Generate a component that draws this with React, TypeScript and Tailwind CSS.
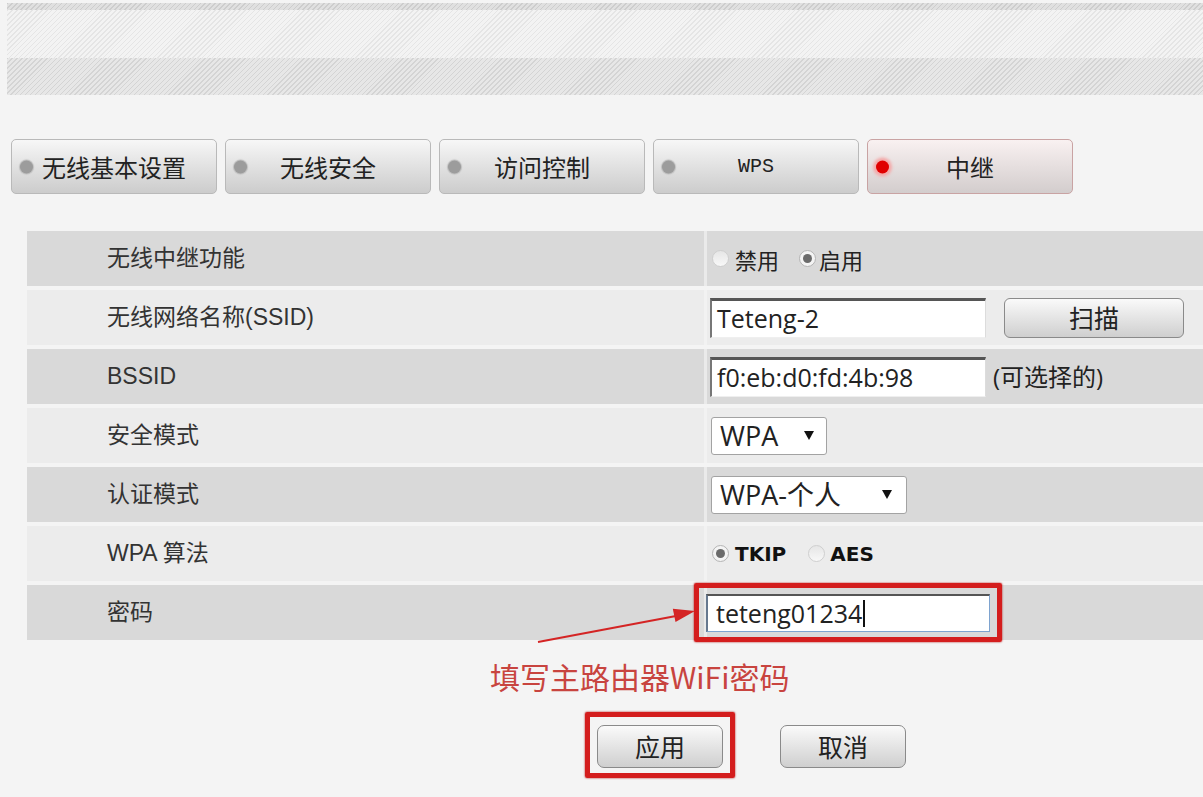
import React from "react";

const LABEL_FONT = "font-['Liberation_Sans','Noto_Sans_CJK_SC',sans-serif]";
const WIDGET_FONT = "font-['Open_Sans','Noto_Sans_CJK_SC',sans-serif]";
const CJK_FONT = "font-['Noto_Sans_CJK_SC',sans-serif]";

function Tab({ label, active, mono }: { label: string; active?: boolean; mono?: boolean }) {
  return (
    <div
      className={`relative w-[206px] h-[55px] shrink-0 rounded-[5px] border flex items-center justify-center text-[#222] ${
        active
          ? "border-[#c9a3a3] bg-linear-to-b from-[#f9f1f1] to-[#d3cdcd]"
          : "border-[#b9b9b9] bg-linear-to-b from-[#f7f7f7] to-[#cccccc]"
      }`}
    >
      <span
        className={`absolute left-[8px] top-1/2 -translate-y-1/2 rounded-full ${
          active
            ? "w-[13px] h-[13px] bg-[#e00000] shadow-[0_0_3px_3px_#f4a9a9]"
            : "w-[13px] h-[13px] bg-[#9c9c9c] shadow-[0_0_1px_1px_#bdbdbd]"
        }`}
      />
      <span
        className={
          mono
            ? "font-['Liberation_Mono',monospace] text-[20px] leading-none"
            : `${CJK_FONT} text-[24px] leading-none`
        }
      >
        {label}
      </span>
    </div>
  );
}

function Row({ dark, label, children }: { dark?: boolean; label: string; children?: React.ReactNode }) {
  return (
    <div className={`flex h-[55px] ${dark ? "bg-[#d9d9d9]" : "bg-[#ececec]"}`}>
      <div className={`w-[677px] shrink-0 pl-[80px] flex items-center text-[23px] text-[#333] leading-none ${LABEL_FONT}`}>
        {label}
      </div>
      <div className={`w-[3px] shrink-0 ${dark ? "bg-[#eaeaea]" : "bg-[#f2f2f2]"}`} />
      <div className="flex-1 flex items-center pl-[3px]">{children}</div>
    </div>
  );
}

function Radio({ checked }: { checked?: boolean }) {
  return (
    <span
      className={`w-[17px] h-[17px] rounded-full border flex items-center justify-center shrink-0 ${
        checked ? "border-[#b4b4b4] bg-[#f4f4f4]" : "border-[#cfcfcf] bg-linear-to-b from-[#e6e6e6] to-[#f8f8f8]"
      }`}
    >
      {checked && <span className="w-[9px] h-[9px] rounded-full bg-[#6b6b6b]" />}
    </span>
  );
}

function TextBox({ value, width = 276 }: { value: string; width?: number }) {
  return (
    <div
      className={`h-[40px] bg-white border-t-[3px] border-l-2 border-r border-b border-t-[#555] border-l-[#777] border-r-[#dcdcdc] border-b-[#efefef] flex items-center pl-[5px] text-[25px] text-[#222] leading-none ${WIDGET_FONT}`}
      style={{ width }}
    >
      {value}
    </div>
  );
}

function Caret() {
  return (
    <svg width="10" height="9" viewBox="0 0 10 9" className="shrink-0">
      <polygon points="0,0 10,0 5,9" fill="#111" />
    </svg>
  );
}

function Button({ label, wide }: { label: string; wide?: boolean }) {
  return (
    <div
      className={`${wide ? "w-[180px] h-[40px] rounded-[6px]" : "w-[126px] h-[43px] rounded-[7px]"} border border-[#8a8a8a] bg-linear-to-b from-[#fafafa] to-[#cfcfcf] flex items-center justify-center text-[25px] text-[#222] leading-none ${CJK_FONT}`}
    >
      {label}
    </div>
  );
}

export default function App() {
  return (
    <div className={`relative w-[1203px] h-[797px] overflow-hidden bg-[#f4f4f4] ${CJK_FONT}`}>
      {/* striped header bands */}
      <div className="pt-[3px] pl-[7px]">
        <div className="h-[7px] bg-[image:repeating-linear-gradient(135deg,#cdcdcd_0px,#cdcdcd_1px,#e0e0e0_1px,#e0e0e0_3.5px)]" />
        <div className="h-[48px] bg-[image:repeating-linear-gradient(135deg,#e5e5e5_0px,#e5e5e5_1px,#f3f3f3_1px,#f3f3f3_3.5px)]" />
        <div className="h-[37px] bg-[image:repeating-linear-gradient(135deg,#d4d4d4_0px,#d4d4d4_1px,#e7e7e7_1px,#e7e7e7_3.5px)]" />
      </div>

      {/* tabs */}
      <div className="mt-[44px] pl-[11px] flex gap-[8px]">
        <Tab label="无线基本设置" />
        <Tab label="无线安全" />
        <Tab label="访问控制" />
        <Tab label="WPS" mono />
        <Tab label="中继" active />
      </div>

      {/* settings table */}
      <div className="mt-[37px] ml-[27px] flex flex-col gap-[4px]">
        <Row dark label="无线中继功能">
          <div className={`flex items-center text-[22px] text-[#222] leading-none ${CJK_FONT}`}>
            <span className="ml-[2px]"><Radio /></span>
            <span className="ml-[6px]">禁用</span>
            <span className="ml-[20px]"><Radio checked /></span>
            <span className="ml-[3px]">启用</span>
          </div>
        </Row>
        <Row label="无线网络名称(SSID)">
          <TextBox value="Teteng-2" />
          <div className="ml-[18px]">
            <Button label="扫描" wide />
          </div>
        </Row>
        <Row dark label="BSSID">
          <TextBox value="f0:eb:d0:fd:4b:98" />
          <span className={`ml-[7px] text-[24px] text-[#222] leading-none ${WIDGET_FONT}`}>(可选择的)</span>
        </Row>
        <Row label="安全模式">
          <div className={`ml-[1px] w-[116px] h-[38px] bg-white border border-[#a3a3a3] rounded-[3px] flex items-center justify-between pl-[8px] pr-[12px] text-[27px] text-[#222] leading-none ${WIDGET_FONT}`}>
            <span>WPA</span>
            <Caret />
          </div>
        </Row>
        <Row dark label="认证模式">
          <div className={`ml-[1px] w-[196px] h-[38px] bg-white border border-[#a3a3a3] rounded-[3px] flex items-center justify-between pl-[8px] pr-[14px] text-[27px] text-[#222] leading-none ${WIDGET_FONT}`}>
            <span>WPA-个人</span>
            <Caret />
          </div>
        </Row>
        <Row label="WPA 算法">
          <div className="flex items-center font-['DejaVu_Sans',sans-serif] font-bold text-[20px] text-[#111] leading-none">
            <span className="ml-[2px]"><Radio checked /></span>
            <span className="ml-[6px]">TKIP</span>
            <span className="ml-[22px]"><Radio /></span>
            <span className="ml-[5px]">AES</span>
          </div>
        </Row>
        <Row dark label="密码">
          <div className="relative -ml-[4px]">
            <div
              className={`w-[284px] h-[38px] bg-white border-t-2 border-l-2 border-r border-b border-t-[#555] border-l-[#66788f] border-r-[#7ea3cf] border-b-[#7ea3cf] flex items-center pl-[8px] text-[25px] text-[#222] leading-none ${WIDGET_FONT}`}
            >
              <span>teteng01234</span>
              <span className="ml-[1px] w-[1.5px] h-[27px] bg-[#111]" />
            </div>
            <div className="absolute -top-[11px] -bottom-[10px] -left-[12px] -right-[12px] border-[5px] border-[#d41d1d] rounded-[2px] shadow-[0_0_2px_#a00]" />
          </div>
        </Row>
      </div>

      {/* annotation */}
      <div className="mt-[12px] pl-[490px] h-[48px] flex items-center text-[30px] text-[#c8443f] leading-none">
        填写主路由器WiFi密码
      </div>

      {/* buttons */}
      <div className="mt-[25px] flex pl-[597px] gap-[57px]">
        <div className="relative">
          <Button label="应用" />
          <div className="absolute -top-[13px] -bottom-[10px] -left-[12px] -right-[12px] border-[5px] border-[#d41d1d] rounded-[2px] shadow-[0_0_2px_#a00]" />
        </div>
        <Button label="取消" />
      </div>

      {/* arrow */}
      <svg className="absolute left-[530px] top-[600px]" width="180" height="50" viewBox="0 0 180 50">
        <line x1="8" y1="42" x2="146" y2="16" stroke="#d42424" strokeWidth="2" />
        <polygon points="165,11 145.5,22 142.8,8.8" fill="#d42424" />
      </svg>
    </div>
  );
}
